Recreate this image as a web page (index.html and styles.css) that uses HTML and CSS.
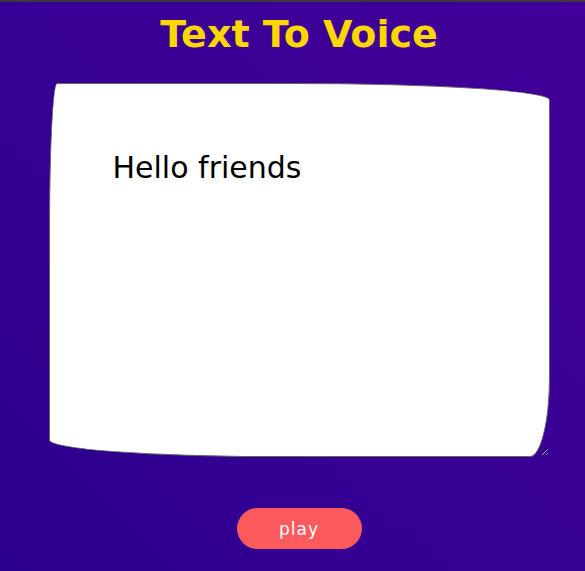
FILE: index.html
```html
<!DOCTYPE html>
<html>
<head>
<meta charset="utf-8">
<title>Text To Voice</title>
<link rel="stylesheet" href="styles.css">
</head>
<body>
<main class="app">
  <h1 class="title">Text To Voice</h1>
  <textarea class="input">Hello friends</textarea>
  <button class="play">play</button>
</main>
</body>
</html>
```
FILE: styles.css
```css
html, body {
  margin: 0;
  height: 100%;
}
body {
  border-top: 2px solid #3a3a3a;
  box-sizing: border-box;
  background: linear-gradient(to top right, #2c008f, #420099);
  font-family: "Comic Sans MS", "DejaVu Sans", sans-serif;
  overflow: hidden;
}
.app {
  display: flex;
  flex-direction: column;
  align-items: center;
  padding-left: 13px;
}
.title {
  margin: 9px 0 0;
  font-size: 38px;
  line-height: 46px;
  font-weight: bold;
  color: #ffd700;
}
.input {
  margin-top: 26px;
  width: 501px;
  height: 374px;
  box-sizing: border-box;
  padding: 66px 62px 66px 63px;
  border: 1px solid #666;
  border-radius: 8px 255px 20px 225px / 150px 17px 80px 17px;
  background: #fff;
  font-family: "Comic Sans MS", "DejaVu Sans", sans-serif;
  font-size: 30px;
  color: #000;
  outline: none;
}
.play {
  margin-top: 51px;
  width: 125px;
  height: 41px;
  border: none;
  border-radius: 21px;
  background: #fc5a5d;
  color: #fff;
  font-family: "Comic Sans MS", "DejaVu Sans", sans-serif;
  font-size: 17px;
  letter-spacing: 1px;
}
```
